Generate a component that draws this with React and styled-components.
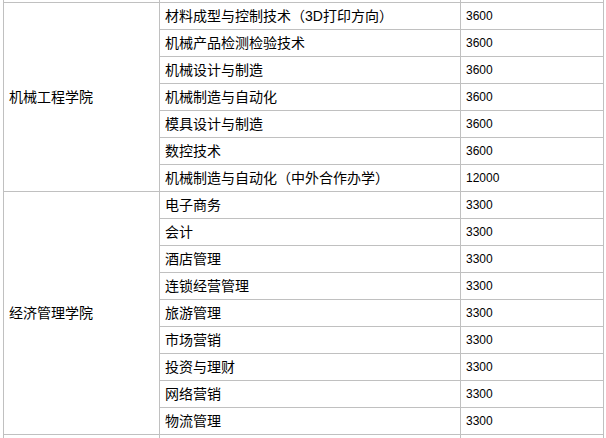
import React from "react";
import styled, { createGlobalStyle } from "styled-components";

const GlobalStyle = createGlobalStyle`
  html, body {
    margin: 0;
    padding: 0;
    background: #ffffff;
    overflow: hidden;
  }
  body {
    font-family: "Liberation Sans", "Noto Sans CJK SC", sans-serif;
    color: #000000;
  }
`;

const Viewport = styled.div`
  width: 606px;
  height: 438px;
  overflow: hidden;
  padding-left: 3px;
  box-sizing: border-box;
`;

const Table = styled.table`
  border-collapse: collapse;
  table-layout: fixed;
  width: 600px;
`;

const Col = styled.col`
  width: ${(p) => p.$w}px;
`;

const Row = styled.tr`
  height: ${(p) => (p.$stub ? 2 : 27)}px;
`;

const Cell = styled.td`
  border: 1px solid #c0c0c0;
  border-top: ${(p) => (p.$stub ? "none" : "1px solid #c0c0c0")};
  padding: 0 0 0 5px;
  height: ${(p) => (p.$stub ? 1 : 26)}px;
  line-height: 16px;
  vertical-align: middle;
  white-space: nowrap;
  overflow: hidden;
  font-family: "Liberation Sans", "Noto Sans CJK SC", sans-serif;
  font-size: ${(p) => (p.$num ? 12 : 14)}px;
  color: #000000;
`;

const groups = [
  {
    name: "机械工程学院",
    rows: [
      ["材料成型与控制技术（3D打印方向）", "3600"],
      ["机械产品检测检验技术", "3600"],
      ["机械设计与制造", "3600"],
      ["机械制造与自动化", "3600"],
      ["模具设计与制造", "3600"],
      ["数控技术", "3600"],
      ["机械制造与自动化（中外合作办学）", "12000"],
    ],
  },
  {
    name: "经济管理学院",
    rows: [
      ["电子商务", "3300"],
      ["会计", "3300"],
      ["酒店管理", "3300"],
      ["连锁经营管理", "3300"],
      ["旅游管理", "3300"],
      ["市场营销", "3300"],
      ["投资与理财", "3300"],
      ["网络营销", "3300"],
      ["物流管理", "3300"],
    ],
  },
  {
    name: "",
    rows: [["", ""]],
  },
];

export default function App() {
  return (
    <>
      <GlobalStyle />
      <Viewport>
        <Table>
          <colgroup>
            <Col $w={156} />
            <Col $w={301} />
            <Col $w={143} />
          </colgroup>
          <tbody>
            <Row $stub>
              <Cell $stub />
              <Cell $stub />
              <Cell $stub />
            </Row>
            {groups.map((g, gi) =>
              g.rows.map((r, ri) => (
                <Row key={`${gi}-${ri}`}>
                  {ri === 0 && <Cell rowSpan={g.rows.length}>{g.name}</Cell>}
                  <Cell>{r[0]}</Cell>
                  <Cell $num>{r[1]}</Cell>
                </Row>
              ))
            )}
          </tbody>
        </Table>
      </Viewport>
    </>
  );
}
